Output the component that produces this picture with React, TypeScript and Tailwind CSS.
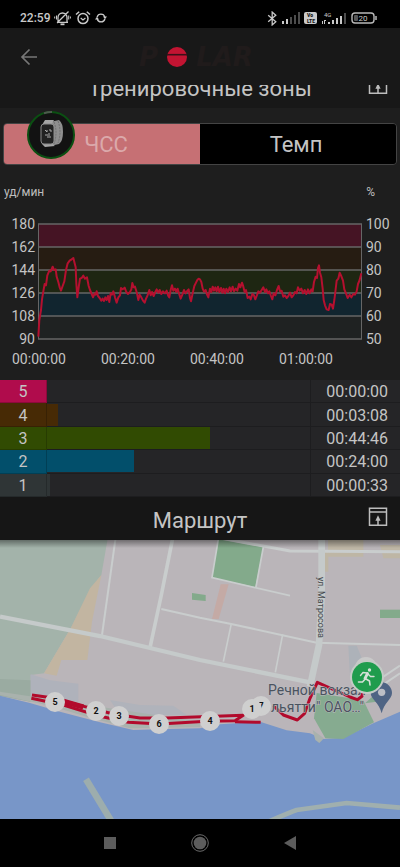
import { useState } from 'react';

type Zone = {
  id: number;
  time: string;
  percent: number;
  color: string;
};

const zones: Zone[] = [
  { id: 5, time: '00:00:00', percent: 0, color: 'bg-[#b00c4c]' },
  { id: 4, time: '00:03:08', percent: 4, color: 'bg-[#472a05]' },
  { id: 3, time: '00:44:46', percent: 62, color: 'bg-[#314b02]' },
  { id: 2, time: '00:24:00', percent: 33, color: 'bg-[#024f6b]' },
  { id: 1, time: '00:00:33', percent: 1, color: 'bg-[#2f3536]' },
];

const bands = ['#451424', '#261c12', '#1e2612', '#11252f', '#1f2222'];
const bpm = [180, 162, 144, 126, 108, 90];
const percents = [100, 90, 80, 70, 60, 50];
const times = ['00:00:00', '00:20:00', '00:40:00', '01:00:00'];

// heart rate curve, three units per pixel
const heartRate =
  '115,380 118,330 123,300 126,268 131,238 134,222 138,226 142,196 148,182 152,184 158,170 162,180 167,178 170,200 175,216 179,232 183,242 188,228 193,214 198,180 203,160 209,152 215,148 220,144 223,156 227,172 229,220 232,262 236,232 240,206 245,204 250,197 255,206 261,202 266,228 270,240 275,252 279,262 284,250 287,254 290,244 294,258 299,264 304,272 308,266 312,273 316,262 320,270 324,258 328,276 332,250 336,254 340,244 345,262 350,278 355,262 360,256 363,234 368,238 374,233 379,246 384,252 390,246 394,238 397,219 401,232 405,230 411,250 415,270 419,254 424,262 429,272 434,278 438,266 442,258 448,240 452,256 456,246 461,258 466,246 470,238 475,248 479,240 484,252 489,244 495,250 500,242 504,256 508,262 512,240 516,226 520,242 525,236 529,246 533,236 537,250 542,266 547,254 552,240 557,250 562,242 566,238 570,264 573,274 578,250 583,228 588,218 592,210 596,206 600,208 604,216 608,236 612,245 617,240 621,254 625,262 630,236 634,246 638,230 642,242 646,232 650,244 654,230 658,246 663,234 667,248 671,236 675,250 679,236 684,246 689,232 693,244 698,230 702,244 707,236 712,242 717,222 721,232 726,218 730,230 734,246 738,240 743,264 748,260 752,268 757,252 762,256 766,268 770,258 775,244 780,248 785,240 790,232 795,246 799,238 804,250 808,244 813,258 817,268 821,250 826,256 831,240 836,228 840,244 845,242 850,260 855,256 860,264 865,258 870,248 875,262 880,256 885,246 890,250 894,232 899,242 904,236 909,250 914,240 919,252 924,238 929,250 934,238 938,244 942,216 947,200 951,204 954,174 957,166 960,188 964,202 968,236 971,270 975,286 980,298 986,300 990,282 995,284 999,296 1003,270 1006,246 1010,212 1015,206 1019,188 1023,196 1029,212 1033,238 1038,250 1043,264 1049,254 1054,262 1060,252 1065,254 1070,244 1074,222 1079,210 1084,190';

const splits = [
  { label: '5', x: 55, y: 162 },
  { label: '2', x: 96, y: 171 },
  { label: '3', x: 119, y: 176 },
  { label: '6', x: 159, y: 184 },
  { label: '4', x: 210, y: 181 },
  { label: '7', x: 261, y: 166 },
  { label: '1', x: 252, y: 169 },
];

const Signal = ({ lit }: { lit: number }) => (
  <svg width="18" height="13" viewBox="0 0 18 13" aria-hidden="true">
    {[3, 5, 7, 9, 12].map((h, i) => (
      <rect key={h} x={i * 4} y={12 - h} width="2" height={h} fill={i < lit ? '#c9c9c9' : '#4c4c4c'} />
    ))}
  </svg>
);

const StatusBar = () => (
  <div className="flex h-7 items-center justify-between bg-black pt-2 pr-[22px] pl-5 text-[#c9c9c9]">
    <div className="flex items-center gap-1">
      <span className="text-xs font-medium">22:59</span>
      <svg width="17" height="16" viewBox="0 0 17 16" fill="none" stroke="currentColor" strokeWidth="1.3" aria-hidden="true">
        <path d="M4 12V7.5a4.5 4.5 0 0 1 9 0V12M3 12.3h11M14.5 1.5 3 13" />
        <path d="M6.5 14.3h4" strokeWidth="1.8" />
        <path d="M2.5 5.5v4M.7 6.5v2M14.7 5.5v4M16.4 6.5v2" strokeWidth="1" />
      </svg>
      <svg width="16" height="16" viewBox="0 0 16 16" fill="none" stroke="currentColor" strokeWidth="1.5" aria-hidden="true">
        <circle cx="8" cy="8.6" r="5" />
        <path d="M1 4.5 4.2 1.7M15 4.5l-3.2-2.8" />
        <path d="m5.7 8 2.3 2 2.4-2" strokeWidth="1.2" />
      </svg>
      <svg width="12" height="12" viewBox="0 0 12 12" aria-hidden="true">
        <path d="M2.1 5A4 4 0 0 1 9.8 5M9.9 7A4 4 0 0 1 2.2 7" fill="none" stroke="currentColor" strokeWidth="1.3" />
        <path d="M8 4.5h4L10 7.2zM0 7.5h4L2 4.8z" fill="currentColor" />
      </svg>
    </div>
    <div className="flex items-center gap-1">
      <svg width="11" height="15" viewBox="0 0 11 15" fill="none" stroke="currentColor" strokeWidth="1.3" aria-hidden="true">
        <path d="m1.2 4.3 7.6 6.4-3.6 3.2V1.1l3.6 3.2-7.6 6.4" />
      </svg>
      <Signal lit={2} />
      <svg width="13" height="12" viewBox="0 0 13 12" aria-hidden="true">
        <rect width="13" height="12" rx="2" fill="#c9c9c9" />
        <text x="6" y="5" textAnchor="middle" fontSize="5" fontWeight="900" fill="#111">Vo</text>
        <text x="7" y="11" textAnchor="middle" fontSize="5" fontWeight="900" fill="#111">LTE</text>
      </svg>
      <svg width="26" height="15" viewBox="0 0 26 15" fill="#c9c9c9" aria-hidden="true">
        <text x="3" y="6" fontSize="6">4G</text>
        <path d="M1 10h1v3H1zM3 9h2v1H4v3H3z" />
        {[2, 4, 6, 8, 11].map((h, i) => (
          <rect key={h} x={7 + i * 4} y={13 - h} width="2" height={h} fill={i < 4 ? '#c9c9c9' : '#4c4c4c'} />
        ))}
      </svg>
      <svg width="27" height="12" viewBox="0 0 27 12" aria-hidden="true">
        <rect x="1" y="1" width="22" height="10" rx="3" fill="none" stroke="#b9b9b9" strokeWidth="1.4" />
        <rect x="3" y="3" width="4" height="6" rx="1" fill="#555" />
        <path d="M25 4v4" stroke="#b9b9b9" strokeWidth="1.5" />
        <text x="12" y="9" textAnchor="middle" fontSize="8" fill="#c9c9c9">20</text>
      </svg>
    </div>
  </div>
);

const SectionHeader = ({ title }: { title: string }) => (
  <div className="flex h-[43px] w-full shrink-0 items-center px-3">
    <span className="w-5" />
    <h2 className="flex-1 pt-1 text-center text-[22px] leading-6 text-[#c4c4c4]">{title}</h2>
    <button type="button" aria-label={`Развернуть: ${title}`} className="w-5 pb-1">
      <svg width="20" height="20" viewBox="0 0 20 20" fill="none" stroke="#bdbdbd" strokeWidth="1.5" aria-hidden="true">
        <path d="M1.5 1.2h17v17h-17zM1.5 5h17" />
        <path d="M10 18v-7" />
        <path d="m10 8.2 2.6 5.6H7.4z" fill="#bdbdbd" stroke="none" />
      </svg>
    </button>
  </div>
);

const WatchBubble = () => (
  <svg className="absolute top-[110px] left-[26px]" width="50" height="50" viewBox="0 0 50 50" role="img" aria-label="Часы">
    <circle cx="25" cy="25" r="23" fill="#121212" stroke="#0b4f12" strokeWidth="2" />
    <path d="M18 3.2A23 23 0 0 1 26 2" fill="none" stroke="#4d5a4d" strokeWidth="2" />
    <path d="M24 12l9-2q4 3 4 12t-4 12l-9 2z" fill="#8f8f8f" />
    <path d="M28 12q4 10 0 22M32 11q4 11 0 22" fill="none" stroke="#707070" strokeWidth="1" strokeDasharray="2 1" />
    <path d="M16 15l3-5h9l-3 5zM16 34l3 3 10-1-4-3z" fill="#a5a5a5" />
    <rect x="15" y="14" width="13" height="20" rx="3" fill="#222" stroke="#8a8a8a" strokeWidth="1" />
    <path d="M19 20l2 2v-2M23 20h2v2M19 25h5M21 27h4M23 23v1" fill="none" stroke="#aaa" strokeWidth="1" />
  </svg>
);

const ZoneChart = () => (
  <svg className="block w-full" viewBox="0 0 400 160" fontSize="14" fill="#c4c4c4" role="img" aria-label="График ЧСС">
    {bands.map((color, i) => (
      <rect key={color} x="38" y={14 + i * 23} width="324" height="23" fill={color} />
    ))}
    {bpm.map((value, i) => (
      <g key={value}>
        <path d={`M38 ${14 + i * 23}H362`} stroke="#666" strokeWidth="1.3" />
        <text x="35" y={19 + i * 23} textAnchor="end">{value}</text>
        <text x="366" y={19 + i * 23}>{percents[i]}</text>
      </g>
    ))}
    <path d="M38.5 14V129M361.5 14V129" stroke="#666" />
    <polyline points={heartRate} transform="scale(.33333)" fill="none" stroke="#b5102f" strokeWidth="6" strokeLinejoin="round" />
    {times.map((time, i) => (
      <text key={time} x={39 + i * 89} y="154" textAnchor="middle">{time}</text>
    ))}
  </svg>
);

const RouteMap = () => (
  <svg className="block w-full" viewBox="0 0 400 279" role="img" aria-label="Карта маршрута">
    <defs>
      <linearGradient id="shade" x1="0" y1="0" x2="0" y2="1">
        <stop offset="0" stopColor="#000" stopOpacity=".4" />
        <stop offset="1" stopColor="#000" stopOpacity="0" />
      </linearGradient>
    </defs>
    <rect width="400" height="279" fill="#bab5b9" />
    {/* drawn at three units per pixel */}
    <g transform="translate(0 -5) scale(.33333)">
      <path d="M0 0H325L304 120L270 165L215 275L132 415L92 420V500L0 482z" fill="#a3b3aa" />
      <path d="M0 432L92 436V500L0 482z" fill="#9aaba1" />
      <path d="M304 120L270 160L212 280L132 415L170 422L184 375H262L276 260z" fill="#c2b5a1" />
      <path d="M92 418L150 436L235 446V500L92 490z" fill="#afb2bb" />
      <path d="M330 495L420 510L520 512L560 540H360z" fill="#b0b3bb" />
      <path d="M655 12L790 36L766 156L636 128z" fill="#83aa8b" />
      <path d="M576 174L617 180V198L576 194z" fill="#83aa8b" />
      <path d="M1140 224H1200V249H1140z" fill="#83aa8b" />
      <path d="M662 148H686L656 252H636z" fill="#c4aaa5" />
      <path d="M984 15H1090V65H984zM1140 30H1200V70H1150zM975 50H985V110H975z" fill="#bfb6a0" opacity=".8" />
      <path d="M1045 332H1070L1088 375V425H1050z" fill="#adb2b9" />
      {/* roads */}
      <g fill="none" stroke="#c9cdcd">
        <path d="M348 0L306 300" strokeWidth="6" />
        <path d="M520 0L484 180L450 338" strokeWidth="11" />
        <path d="M484 222L600 248L690 266L950 323L1200 330" strokeWidth="6" />
        <path d="M655 12L636 128L870 182M790 36L768 156M694 266L670 380M848 298L826 412" strokeWidth="5" />
        <path d="M655 8L870 48L1200 50" strokeWidth="9" />
        <path d="M965 0V180L957 330L930 455" strokeWidth="20" stroke="#c5caca" />
        <path d="M0 245L300 303L600 375L930 442" strokeWidth="13" stroke="#c5caca" />
        <path d="M1110 452L1200 392M1110 475L1200 415" strokeWidth="6" />
      </g>
      {/* river and shore */}
      <path d="M0 480L150 512L270 548L390 580L600 576V560L0 470z" fill="#a9b2ad" />
      <path d="M0 482L90 504L180 530L300 562L400 585L480 583L600 580L660 568L780 560L860 586L930 595L970 612L1030 608L1120 565L1200 530V860H0z" fill="#7896c8" />
      <path d="M950 474L1090 496L1122 562L1030 612L976 610L942 550z" fill="#86ab90" />
      <path d="M1095 505L1120 482L1150 474L1130 500z" fill="#86ab90" />
      <path d="M938 585L972 610L958 624L946 615z" fill="#a9b2ad" />
      <path d="M258 733L335 860" fill="none" stroke="#9dadad" strokeWidth="20" />
      <path d="M805 860Q860 836 890 825L1040 804L1200 818" fill="none" stroke="#a0afae" strokeWidth="14" />
      {/* ferry station pin */}
      <path d="M1145 535C1138 503 1112 492 1112 474a32 32 0 0 1 64 0C1176 492 1152 503 1145 535z" fill="#4f6484" />
      <circle cx="1145" cy="472" r="11" fill="#bdbfc6" />
    </g>
    <text transform="translate(318 37) rotate(90)" fontSize="9" fill="#44484c">ул. Матросова</text>
    <g transform="translate(0 -5) scale(.33333)" fill="none" stroke="#b20a2c" strokeWidth="9" strokeLinejoin="round">
      <path d="M96 480L165 490L240 511L340 537L420 549H500L730 541L705 557L620 559L480 567L385 562L300 544L190 510L94 490" />
      <path d="M190 499L250 516" strokeWidth="16" />
      <path d="M705 560L782 562M820 512L850 540L892 555L914 535L930 490L952 442L1050 486L1072 494L1086 484V470" />
    </g>
    <g fontSize="14" fill="#4b535f" stroke="#bdbdc1" strokeWidth="1" paintOrder="stroke">
      <text x="268" y="155">Речной вокзал</text>
      <text x="271" y="172">льятти" ОАО…"</text>
    </g>
    <rect width="400" height="8" fill="url(#shade)" />
    <circle cx="366" cy="128" r="11" fill="#c9c9c9" />
    {splits.map((split) => (
      <g key={split.label}>
        <circle cx={split.x} cy={split.y} r="10" fill="#cfcfcf" />
        <text x={split.x} y={split.y + 3} textAnchor="middle" fontSize="9" fontWeight="700" fill="#111">{split.label}</text>
      </g>
    ))}
    <circle cx="367" cy="137" r="17" fill="#c4cbc6" />
    <circle cx="367" cy="137" r="15" fill="#1f9c4d" />
    {/* runner */}
    <g fill="none" stroke="#d5e0d8" strokeLinecap="round" strokeLinejoin="round">
      <circle cx="369.5" cy="130" r="1.7" fill="#d5e0d8" stroke="none" />
      <path d="M367.5 133.5l-2.500 5" strokeWidth="2.800" />
      <path d="M367 133l-4-.500-2.500 3M368.500 134.500l2 2h3.500" strokeWidth="1.400" />
      <path d="M366 139l3.500 2 .500 4M364.800 139.500l-2.300 2.500h-4" strokeWidth="1.600" />
    </g>
  </svg>
);

const App = () => {
  const [tab, setTab] = useState('hr');

  return (
    <div className="relative min-h-screen bg-black font-[Roboto,'Noto_Sans',sans-serif]">
      <StatusBar />
      <header className="relative flex h-[57px] items-center justify-center bg-[#181818]">
        <button type="button" aria-label="Назад" className="absolute left-5">
          <svg width="18" height="18" viewBox="0 0 18 18" fill="none" stroke="#777" strokeWidth="1.7" aria-hidden="true">
            <path d="M17 9H2M9.5 1.5 2 9l7.5 7.5" />
          </svg>
        </button>
        <h1 className="flex items-center gap-2 pr-2 font-['DejaVu_Sans',sans-serif] text-[26px] leading-7 font-bold text-[#201b1b] italic">
          <span>P</span>
          <svg width="22" height="22" viewBox="0 0 22 22" aria-hidden="true">
            <circle cx="11" cy="11" r="10" fill="#c21432" />
            <path d="M1 8.7h20" stroke="#3a1018" strokeWidth="1.6" />
          </svg>
          <span>LAR</span>
        </h1>
      </header>
      <div className="flex h-[23px] items-end overflow-hidden bg-[#181818]">
        <SectionHeader title="Тренировочные зоны" />
      </div>

      <main>
        <section className="bg-[#1e1e1e] pb-[10px]">
          <div className="px-[3px] pt-[15px]">
            <div className="grid h-[42px] grid-cols-2 overflow-hidden rounded border border-[#444] text-[22px]">
              <button
                type="button"
                onClick={() => setTab('hr')}
                className={`pl-2 ${tab === 'hr' ? 'bg-[#c67074] text-[#dba9ab]' : 'bg-black text-[#c4c4c4]'}`}
              >
                ЧСС
              </button>
              <button
                type="button"
                onClick={() => setTab('pace')}
                className={`pr-1 ${tab === 'pace' ? 'bg-[#c67074] text-[#dba9ab]' : 'bg-black text-[#c4c4c4]'}`}
              >
                Темп
              </button>
            </div>
          </div>
          <div className="flex h-[45px] items-center justify-between pt-2 pr-[25px] pl-1 text-xs text-[#bdbdbd]">
            <span>уд/мин</span>
            <span>%</span>
          </div>
          <ZoneChart />
        </section>

        <table className="h-[117px] w-full table-fixed border-separate border-spacing-0 bg-[#252527] text-base leading-5 text-[#c4c4c4]">
          <tbody>
            {zones.map((zone) => (
              <tr key={zone.id}>
                <th scope="row" className={`w-[47px] border-r border-b border-black/20 p-0 pt-0.5 font-normal ${zone.color}`}>
                  {zone.id}
                </th>
                <td className="border-b border-black/20 p-0">
                  <div className={`h-[22px] ${zone.color}`} style={{ width: `${zone.percent}%` }} />
                </td>
                <td className="w-[90px] border-b border-l border-black/20 p-0 pt-0.5 pr-3 text-right">{zone.time}</td>
              </tr>
            ))}
          </tbody>
        </table>

        <section className="bg-[#161616]">
          <SectionHeader title="Маршрут" />
          <RouteMap />
        </section>
      </main>

      <nav className="flex h-12 items-center justify-center bg-black">
        <button type="button" aria-label="Недавние" className="flex w-[90px] justify-center">
          <span className="size-3 bg-[#5c5c5c]" />
        </button>
        <button type="button" aria-label="Домой" className="flex w-[90px] justify-center">
          <svg width="18" height="18" viewBox="0 0 18 18" aria-hidden="true">
            <circle cx="9" cy="9" r="8.3" fill="none" stroke="#6a6a6a" />
            <circle cx="9" cy="9" r="6.3" fill="#5c5c5c" />
          </svg>
        </button>
        <button type="button" aria-label="Назад" className="flex w-[90px] justify-center">
          <svg width="12" height="14" viewBox="0 0 12 14" aria-hidden="true">
            <path d="M12 0v14L0 7z" fill="#5c5c5c" />
          </svg>
        </button>
      </nav>
      <WatchBubble />
    </div>
  );
};

export default App;
